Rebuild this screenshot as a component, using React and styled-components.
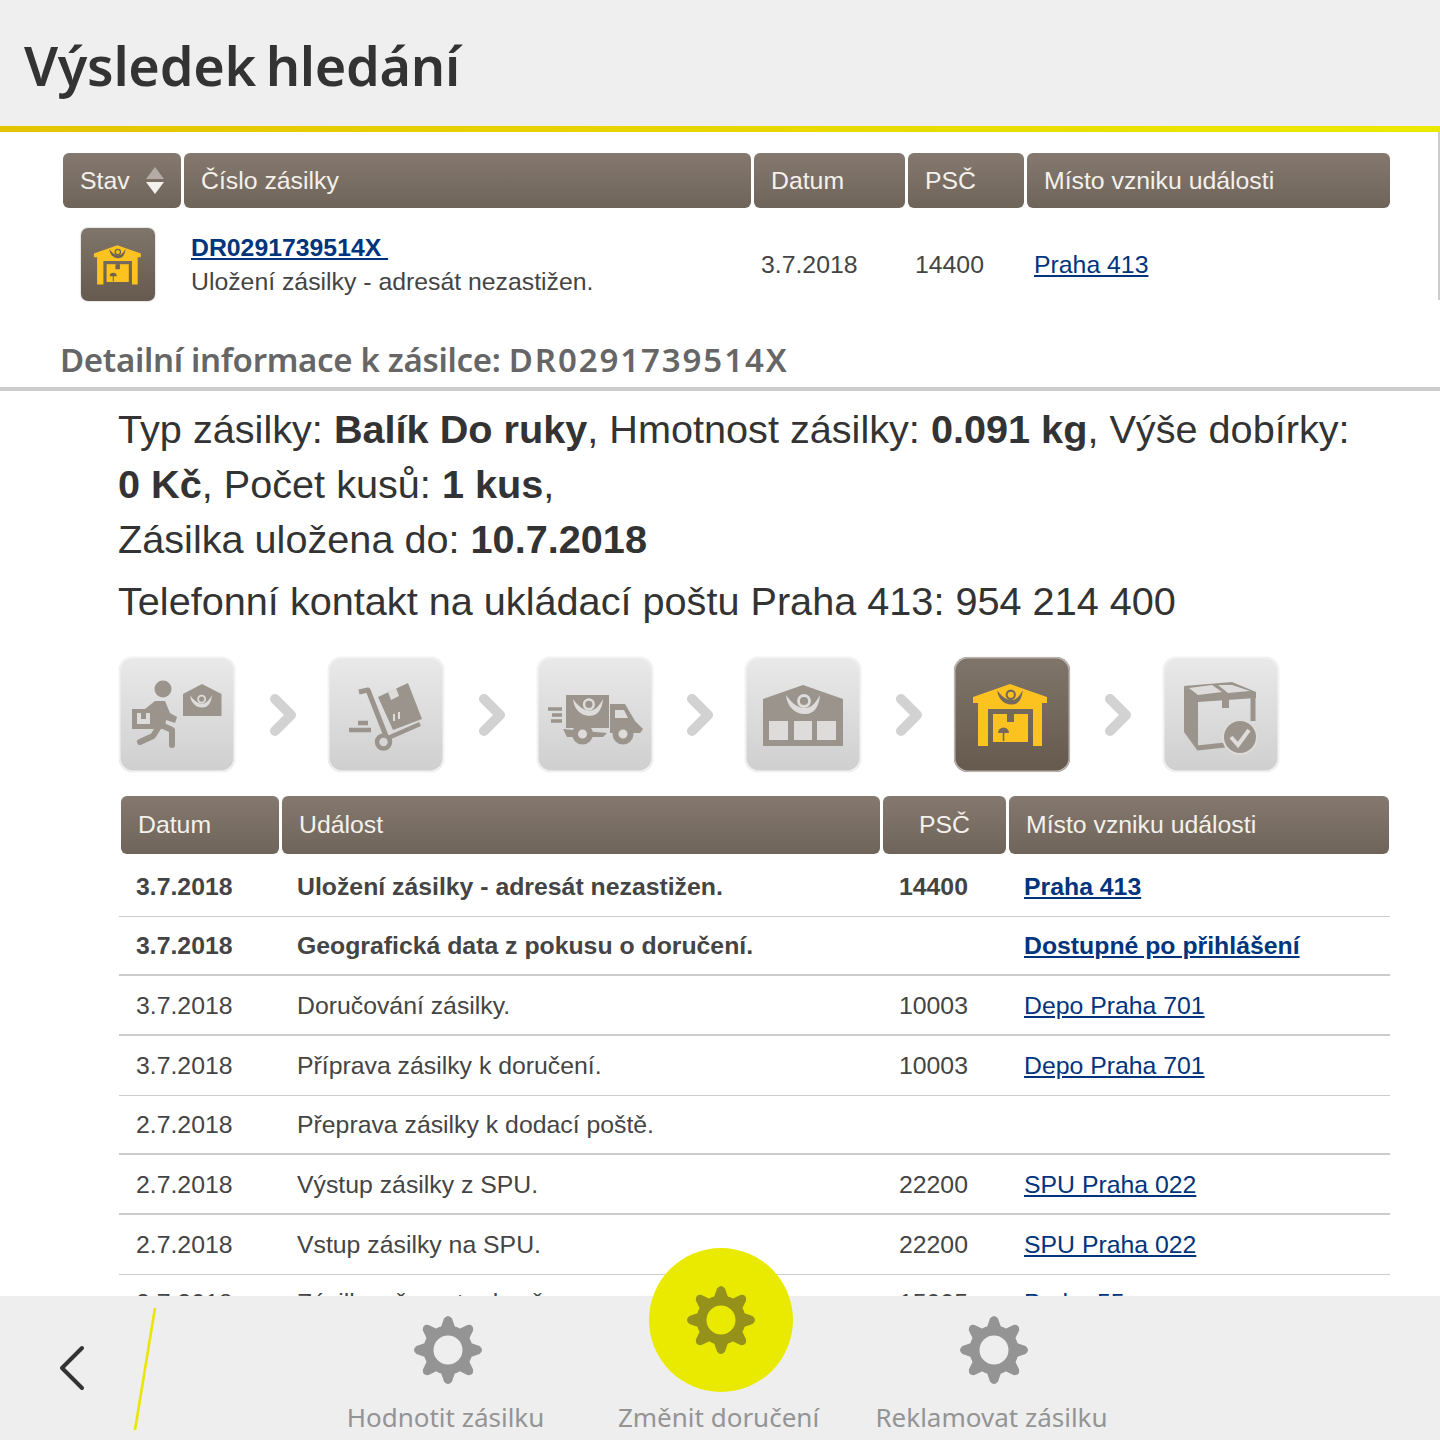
import React from 'react';
import styled, { createGlobalStyle } from 'styled-components';

const GlobalStyle = createGlobalStyle`
  html, body {
    margin: 0;
    padding: 0;
    background: #fff;
  }
  body {
    font-family: "Liberation Sans", Arial, sans-serif;
    color: #444;
  }
`;

const summaryCols = '118px 567px 151px 116px 363px';
const eventCols = '158px 598px 123px 380px';

const events = [
  { date: '3.7.2018', text: 'Uložení zásilky - adresát nezastižen.', zip: '14400', place: 'Praha 413', strong: true },
  { date: '3.7.2018', text: 'Geografická data z pokusu o doručení.', place: 'Dostupné po přihlášení', strong: true, thick: true },
  { date: '3.7.2018', text: 'Doručování zásilky.', zip: '10003', place: 'Depo Praha 701', thick: true },
  { date: '3.7.2018', text: 'Příprava zásilky k doručení.', zip: '10003', place: 'Depo Praha 701' },
  { date: '2.7.2018', text: 'Přeprava zásilky k dodací poště.', thick: true },
  { date: '2.7.2018', text: 'Výstup zásilky z SPU.', zip: '22200', place: 'SPU Praha 022', thick: true },
  { date: '2.7.2018', text: 'Vstup zásilky na SPU.', zip: '22200', place: 'SPU Praha 022' },
  { date: '2.7.2018', text: 'Zásilka převzata do přepravy.', zip: '15005', place: 'Praha 55' },
];

const Horn = ({ x, y, color, scale = 1 }) => (
  <g transform={`translate(${x} ${y}) scale(${scale})`}>
    <path d="M-17-9C-16 4-6 11 3 10C10 10 16 4 17-9C13-2 9 4 2 4C-6 4-12-2-17-9Z" fill={color} />
    <ellipse cx="1" cy="-3" rx="5.500" ry="5.500" fill="none" stroke={color} strokeWidth="2.800" />
  </g>
);

const Glyph = ({ children }) => (
  <svg width="116" height="115" viewBox="0 0 116 115">
    {children}
  </svg>
);

const grey = '#9b948c';
const pale = '#dedcda';
const amber = '#fcc21f';
const brown = '#75695e';

const RunnerIcon = () => (
  <Glyph>
    <circle cx="44" cy="32" r="8.500" fill={grey} />
    <path d="M64 37L83 27L102.500 37V59H64Z" fill={grey} />
    <Horn x={82} y={44} color={pale} scale={0.64} />
    <path d="M13 52H26L36 44H46L51 56L58 60L56 66L47 63L46 72H13Z" fill={grey} />
    <path d="M18 56V67H31V56H27V62H22V56Z" fill={pale} />
    <path d="M41 68L34 79L21 85M42 68L53 73V88" fill="none" stroke={grey} strokeWidth="6" strokeLinecap="round" strokeLinejoin="round" />
  </Glyph>
);

const TrolleyIcon = () => (
  <Glyph>
    <path d="M31 35L40 33L58 79" fill="none" stroke={grey} strokeWidth="5" strokeLinejoin="round" />
    <path d="M60 81L92 67" fill="none" stroke={grey} strokeWidth="4.500" />
    <path d="M50 40L80 26L94 62L65 73Z" fill={grey} />
    <path d="M60 35L68 31L71 39L63 43Z" fill={pale} />
    <path d="M66 64V57M71 62V55" stroke={pale} strokeWidth="2" />
    <path d="M30 66H40M21 73H43" stroke={grey} strokeWidth="4.500" />
    <circle cx="55.500" cy="85" r="6.500" fill="none" stroke={grey} strokeWidth="4.500" />
  </Glyph>
);

const TruckIcon = () => (
  <Glyph>
    <rect x="29" y="38" width="43" height="33" fill={grey} />
    <path d="M73 47H88L98 64L106 72L103 76H73Z" fill={grey} />
    <path d="M78 53H87L91 61H78Z" fill={pale} />
    <path d="M11 52H25M15 58H25M14 64H25" stroke={grey} strokeWidth="3.600" />
    <path d="M26 72L30 80H66L70 76Z" fill={grey} />
    <circle cx="45.500" cy="77" r="7.500" fill={pale} stroke={grey} strokeWidth="6" />
    <circle cx="86" cy="77" r="7.500" fill={pale} stroke={grey} strokeWidth="6" />
    <Horn x={51} y={50} color={pale} scale={0.88} />
  </Glyph>
);

const DepotIcon = () => (
  <Glyph>
    <path d="M18 42L58 28L98 42V89H18Z" fill={grey} />
    <rect x="24" y="64" width="19" height="19" fill={pale} />
    <rect x="49" y="64" width="18" height="19" fill={pale} />
    <rect x="72" y="64" width="19" height="19" fill={pale} />
    <Horn x={58} y={47} color={pale} />
  </Glyph>
);

const StorageGlyph = ({ back = brown }) => (
  <>
    <path d="M19 40L56 27L93 40V46H88V89H79V52H34V89H24V46H19Z" fill={amber} />
    <rect x="39" y="57" width="35" height="28" fill={amber} />
    <rect x="53" y="57" width="7" height="8" fill={back} />
    <path d="M44 76A5.500 5.500 0 0 1 55 76Z" fill={back} />
    <path d="M49.500 75V84" stroke={back} strokeWidth="1.600" />
    <Horn x={56} y={40} color={back} scale={0.75} />
  </>
);

const StorageIcon = () => (
  <Glyph>
    <StorageGlyph />
  </Glyph>
);

const DeliveredIcon = () => (
  <Glyph>
    <path d="M21 29L69 25L93 35V41L35 45Z" fill={grey} />
    <path d="M26 31L49 28L59 35L35 38Z" fill={pale} />
    <path d="M55 28L69 28L87 34L65 36Z" fill={pale} />
    <path d="M21 29L35 43V93L34 93L21 75Z" fill={grey} />
    <path d="M90 38V64M34 91L62 88" fill="none" stroke={grey} strokeWidth="5" />
    <path d="M59 42V51H66V41Z" fill={grey} />
    <circle cx="77" cy="80" r="17" fill={grey} stroke={pale} strokeWidth="2" />
    <path d="M68 80L75 88L86 73" fill="none" stroke={pale} strokeWidth="4" />
  </Glyph>
);

const steps = [
  { icon: RunnerIcon },
  { icon: TrolleyIcon },
  { icon: TruckIcon },
  { icon: DepotIcon },
  { icon: StorageIcon, active: true },
  { icon: DeliveredIcon },
];

const Gear = ({ color }) => (
  <svg width="70" height="70" viewBox="-35 -35 70 70">
    <circle r="19.500" fill="none" stroke={color} strokeWidth="10" />
    {[0, 45, 90, 135, 180, 225, 270, 315].map((deg) => (
      <path
        key={deg}
        transform={`rotate(${deg})`}
        d="M-8-20L-4-31.500Q0-36.500 4-31.500L8-20Z"
        fill={color}
      />
    ))}
  </svg>
);

const App = () => (
  <Page>
    <GlobalStyle />
    <TitleBar>
      <Title>Výsledek hledání</Title>
    </TitleBar>
    <Summary>
      <HeadRow $cols={summaryCols}>
        <HeadCell>
          Stav
          <SortArrows>
            <ArrowUp />
            <ArrowDown />
          </SortArrows>
        </HeadCell>
        <HeadCell>Číslo zásilky</HeadCell>
        <HeadCell>Datum</HeadCell>
        <HeadCell>PSČ</HeadCell>
        <HeadCell>Místo vzniku události</HeadCell>
      </HeadRow>
      <SummaryRow $cols={summaryCols}>
        <SmallTile>
          <svg width="74" height="73" viewBox="0 0 114 115">
            <StorageGlyph back="#6e6359" />
          </svg>
        </SmallTile>
        <SummaryMain>
          <BoldLink href="#">DR0291739514X&nbsp;</BoldLink>
          <span>Uložení zásilky - adresát nezastižen.</span>
        </SummaryMain>
        <SummaryDate>3.7.2018</SummaryDate>
        <SummaryZip>14400</SummaryZip>
        <SummaryPlace>
          <PlainLink href="#">Praha 413</PlainLink>
        </SummaryPlace>
      </SummaryRow>
    </Summary>

    <DetailTitle>
      Detailní informace k zásilce: <ParcelCode>DR0291739514X</ParcelCode>
    </DetailTitle>

    <Detail>
      <Facts>
        <p>
          Typ zásilky: <b>Balík Do ruky</b>, Hmotnost zásilky: <b>0.091 kg</b>, Výše dobírky:
          <br />
          <b>0 Kč</b>, Počet kusů: <b>1 kus</b>,
          <br />
          Zásilka uložena do: <b>10.7.2018</b>
        </p>
        <Phone>Telefonní kontakt na ukládací poštu Praha 413: 954 214 400</Phone>
      </Facts>

      <Steps>
        {steps.map(({ icon: Icon, active }, i) => (
          <React.Fragment key={i}>
            <Tile $active={active}>
              <Icon />
            </Tile>
            {i < steps.length - 1 && (
              <Chevron width="28" height="44" viewBox="0 0 28 44">
                <path d="M6 6L22 22L6 38" />
              </Chevron>
            )}
          </React.Fragment>
        ))}
      </Steps>

      <EventHead $cols={eventCols}>
        <HeadCell>Datum</HeadCell>
        <HeadCell>Událost</HeadCell>
        <HeadCell $center>PSČ</HeadCell>
        <HeadCell>Místo vzniku události</HeadCell>
      </EventHead>

      {events.map((ev, i) => (
        <EventRow key={i} $strong={ev.strong} $thick={ev.thick}>
          <span>{ev.date}</span>
          <span>{ev.text}</span>
          <ZipCell>{ev.zip}</ZipCell>
          <span>{ev.place && <PlainLink href="#">{ev.place}</PlainLink>}</span>
        </EventRow>
      ))}
    </Detail>

    <BottomBar>
      <BackButton>
        <svg width="28" height="46" viewBox="0 0 28 46">
          <path d="M24 3L4 23L24 43" fill="none" stroke="#333" strokeWidth="4" strokeLinecap="round" strokeLinejoin="round" />
        </svg>
      </BackButton>
      <Slash width="24" height="122" viewBox="0 0 24 122">
        <path d="M22 0L2 122" stroke="#e9e600" strokeWidth="2.600" />
      </Slash>
      <NavItems>
        <NavItem>
          <GearSlot>
            <Gear color="#949494" />
          </GearSlot>
          Hodnotit zásilku
        </NavItem>
        <NavItem>
          <GearSlot>
            <ActiveDisc>
              <Gear color="#95911a" />
            </ActiveDisc>
          </GearSlot>
          Změnit doručení
        </NavItem>
        <NavItem>
          <GearSlot>
            <Gear color="#949494" />
          </GearSlot>
          Reklamovat zásilku
        </NavItem>
      </NavItems>
    </BottomBar>
  </Page>
);

const Page = styled.div`
  position: relative;
  width: 1440px;
  height: 1440px;
  overflow: hidden;
  background: #fff;
`;

const TitleBar = styled.header`
  height: 122px;
  padding: 4px 0 0 24px;
  display: flex;
  align-items: center;
  background: #efefef;
  border-bottom: 6px solid;
  border-image: linear-gradient(90deg, #e4c400, #ece900) 1;
`;

const Title = styled.h1`
  margin: 0;
  font-family: "Noto Sans", sans-serif;
  font-size: 54px;
  font-weight: 600;
  letter-spacing: -0.3px;
  word-spacing: -4px;
  color: #333;
`;

const Summary = styled.section`
  height: 168px;
  padding: 21px 48px 0 63px;
  box-sizing: border-box;
  border-right: 2px solid #ccc;
`;

const HeadRow = styled.div`
  display: grid;
  grid-template-columns: ${(p) => p.$cols};
  column-gap: 3px;
  height: 55px;
`;

const HeadCell = styled.div`
  display: flex;
  align-items: center;
  justify-content: ${(p) => (p.$center ? 'center' : 'flex-start')};
  padding: 0 ${(p) => (p.$center ? '0' : '17px')};
  border-radius: 6px;
  font-size: 24.8px;
  color: #f4f1ec;
  background: linear-gradient(#85796f, #6f6459);
`;

const SortArrows = styled.span`
  display: flex;
  flex-direction: column;
  gap: 3px;
  margin-left: 16px;
`;

const ArrowUp = styled.i`
  width: 0;
  height: 0;
  border: 9px solid transparent;
  border-top: 0;
  border-bottom: 12px solid #b4aca4;
`;

const ArrowDown = styled.i`
  width: 0;
  height: 0;
  border: 9px solid transparent;
  border-bottom: 0;
  border-top: 12px solid #f4f1ec;
`;

const SummaryRow = styled.div`
  display: grid;
  grid-template-columns: ${(p) => p.$cols};
  column-gap: 3px;
  align-items: center;
  margin-top: 20px;
  font-size: 24.8px;
  color: #444;
`;

const SmallTile = styled.div`
  width: 74px;
  height: 73px;
  margin-left: 18px;
  border-radius: 7px;
  background: linear-gradient(#80756a, #665a4e);
  box-shadow: 0 0 2px #aaa;

  svg {
    filter: blur(0.4px);
  }
`;

const SummaryMain = styled.div`
  display: flex;
  flex-direction: column;
  align-items: flex-start;
  gap: 6px;
  padding-left: 7px;
`;

const SummaryDate = styled.div`
  padding-left: 7px;
`;

const SummaryZip = styled.div`
  padding-left: 7px;
`;

const SummaryPlace = styled.div`
  padding-left: 7px;
`;

const PlainLink = styled.a`
  color: #00347c;
`;

const BoldLink = styled(PlainLink)`
  font-weight: 700;
`;

const DetailTitle = styled.h2`
  margin: 0;
  height: 91px;
  padding: 37px 0 0 60px;
  box-sizing: border-box;
  border-bottom: 4px solid #ccc;
  font-family: "Noto Sans", sans-serif;
  font-size: 33px;
  line-height: 45px;
  font-weight: 600;
  letter-spacing: -0.32px;
  color: #666;
`;

const ParcelCode = styled.span`
  letter-spacing: 1.9px;
`;

const Detail = styled.main`
  padding: 11px 50px 0 119px;
`;

const Facts = styled.div`
  font-size: 39.65px;
  line-height: 55px;
  color: #333;
  margin-left: -1px;

  p {
    margin: 0;
  }
`;

const Phone = styled.p`
  && {
    margin-top: 7px;
  }
`;

const Steps = styled.div`
  display: flex;
  align-items: center;
  margin-top: 28px;
`;

const Tile = styled.div`
  width: 116px;
  height: 115px;
  box-sizing: border-box;
  border-radius: 14px;
  overflow: hidden;
  background: ${(p) =>
    p.$active ? 'linear-gradient(#80756a, #665a4e)' : 'linear-gradient(#e9e9e9, #cfcfcf)'};
  box-shadow: inset 0 0 0 1.5px ${(p) => (p.$active ? '#bbb4ad' : '#f2f2f2')}, 0 0 1px #bbb;

  svg {
    filter: blur(0.4px);
  }
`;

const Chevron = styled.svg`
  margin: 0 31px 0 33.8px;

  path {
    fill: none;
    stroke: #d2d2d2;
    stroke-width: 10;
    stroke-linecap: round;
    stroke-linejoin: round;
  }
`;

const EventHead = styled(HeadRow)`
  height: 58px;
  margin: 24px 0 3px 2px;
`;

const EventRow = styled.div`
  display: grid;
  grid-template-columns: 161px 602px 125px 1fr;
  align-items: center;
  height: 59.7px;
  box-sizing: border-box;
  padding: 1px 0 0 17px;
  border-bottom: ${(p) => (p.$thick ? '2px' : '1px')} solid #ccc;
  font-size: 24.8px;
  font-weight: ${(p) => (p.$strong ? 700 : 400)};
  color: #444;

  &:last-child {
    padding: 0 0 2px 17px;
  }
`;

const ZipCell = styled.span`
  white-space: nowrap;
`;

const BottomBar = styled.nav`
  position: absolute;
  left: 0;
  right: 0;
  bottom: 0;
  height: 144px;
  display: flex;
  background: #eee;
`;

const BackButton = styled.div`
  width: 134px;
  padding: 49px 0 0 58px;
  box-sizing: border-box;
`;

const Slash = styled.svg`
  margin-top: 12px;
  margin-left: -1px;
`;

const NavItems = styled.div`
  display: grid;
  grid-template-columns: repeat(3, 273px);
  margin-left: 152px;
`;

const NavItem = styled.div`
  display: flex;
  flex-direction: column;
  align-items: center;
  font-family: "Noto Sans", sans-serif;
  font-size: 26px;
  line-height: 36px;
  color: #949494;
  white-space: nowrap;
`;

const GearSlot = styled.div`
  position: relative;
  width: 70px;
  height: 70px;
  margin: 19px 0 14px 5px;
`;

const ActiveDisc = styled.div`
  position: absolute;
  left: -37.5px;
  top: -67px;
  width: 144px;
  height: 144px;
  display: flex;
  align-items: center;
  justify-content: center;
  border-radius: 50%;
  background: #eaea00;
`;

export default App;
